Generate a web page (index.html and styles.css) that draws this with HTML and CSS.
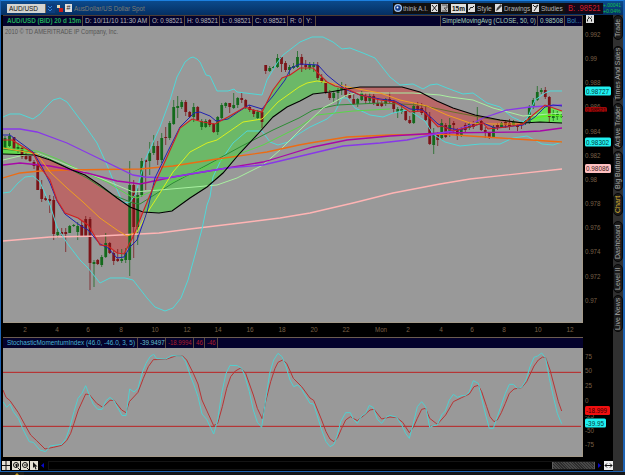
FILE: index.html
```html
<!DOCTYPE html>
<html lang="en">
<head>
    <meta charset="UTF-8">
    <title>AUD/USD Chart</title>
    <link rel="stylesheet" href="styles.css">
</head>
<body>
    <div class="window">
        <div class="main">
            <div class="toolbar">
                <div class="symbol"><span data-w="29">AUD/USD</span></div>
                <div class="dropdown"><svg width="8" height="9"><path d="M2 2l2 2 2-2M2 5l2 2 2-2" fill="none" stroke="#2f86dd"/></svg></div>
                <svg class="link-icon" width="7" height="9"><path d="M1 1h3v3h-3z" fill="#e8d8b0"/><path d="M3 4h4v4h-4z" fill="#c01818"/></svg>
                <div class="hash"><span>#</span></div>
                <div class="desc"><span data-w="71">AusDollar/US Dollar Spot</span></div>
                <div class="tools">
                    <svg class="w10" width="10" height="10"><circle cx="5" cy="5" r="4" fill="#a9c8ee"/><circle cx="5" cy="5" r="2.8" fill="#123a8c"/><circle cx="4.5" cy="4.5" r="1" fill="#fff"/></svg>
                    <div class="w28"><span data-w="25">think A.I.</span></div>
                    <svg class="w10" width="10" height="10"><path d="M1 1h7v8h-7z" fill="#ddd"/><path d="M2 2l5 6M7 2l-5 6" stroke="#222"/></svg>
                    <svg class="w10" width="10" height="10"><path d="M1 1h7v8h-7z" fill="#bbb"/><path d="M2 2h5v3h-3l3 3h-5" fill="none" stroke="#555"/></svg>
                    <div class="period"><span data-w="13">15m</span></div>
                    <svg class="w10" width="10" height="10"><path d="M1 1h7v8h-7z" fill="#ddd"/><path d="M2 7l2-3 1 1 2-2" fill="none" stroke="#222"/></svg>
                    <div class="w17"><span data-w="15">Style</span></div>
                    <svg class="w10" width="10" height="10"><path d="M1 1h7v8h-7z" fill="#ddd"/><path d="M2 8l1-3 4-4 1 2-4 4z" fill="#444"/></svg>
                    <div class="w28"><span data-w="26">Drawings</span></div>
                    <svg class="w10" width="10" height="10"><path d="M1 1h7v8h-7z" fill="#ddd"/><path d="M2 2l2 2 3-2-4 6" fill="none" stroke="#222"/></svg>
                    <div class="w24"><span data-w="22">Studies</span></div>
                </div>
                <div class="bid"><span data-w="33">B: .98521</span></div>
                <div class="change"><span data-w="18">+.00041</span><span data-w="18">+0.04%</span></div>
            </div>
            <div class="price">
                <div class="left">
                    <div class="info">
                        <div class="cell name"><span data-w="74">AUD/USD (BID) 20 d 15m</span></div>
                        <div class="cell date"><span data-w="62">D: 10/11/10 11:30 AM</span></div>
                        <div class="cell c35"><span data-w="31">O: 0.98521</span></div>
                        <div class="cell c35"><span data-w="31">H: 0.98521</span></div>
                        <div class="cell c33"><span data-w="29">L: 0.98521</span></div>
                        <div class="cell c35"><span data-w="31">C: 0.98521</span></div>
                        <div class="cell c16"><span data-w="12">R: 0</span></div>
                        <div class="cell c12"><span data-w="6">Y:</span></div>
                        <div class="cell sma"><span data-w="94">SimpleMovingAvg (CLOSE, 50, 0)</span></div>
                        <div class="cell smav"><span data-w="23">0.98508</span></div>
                        <div class="cell bol"><span data-w="14">Bol...</span></div>
                    </div>
                    <svg id="chart" class="plot" width="580" height="297" viewBox="3 26 580 297"></svg>
                    <svg id="times" width="580" height="14" viewBox="3 323 580 14"></svg>
                </div>
                <svg id="prices" width="30" height="322" viewBox="583 15 30 322"></svg>
            </div>
            <div class="osc">
                <div class="left">
                    <div class="info">
                        <div class="cell smi"><span data-w="128">StochasticMomentumIndex (46.0, -46.0, 3, 5)</span></div>
                        <div class="cell smik"><span data-w="25">-39.9497</span></div>
                        <div class="cell red c28"><span data-w="24">-18.9994</span></div>
                        <div class="cell red c11"><span data-w="7">46</span></div>
                        <div class="cell red c13"><span data-w="9">-46</span></div>
                    </div>
                    <svg class="plot" width="580" height="109" viewBox="9 114 1740 327">
                        <path class="level" d="M9 187H1743M9 349H1743"/>
                        <polyline class="d" points="9,240 18,262 30,272 55,308 75,345 92,375 110,392 135,417 160,412 185,406 200,392 212,370 222,340 235,300 257,252 268,254 290,280 308,292 330,271 342,271 365,300 378,308 388,275 414,247 430,205 445,170 460,149 497,148 530,137 548,138 560,150 580,190 594,222 606,270 641,347 653,340 667,290 680,235 692,200 706,183 722,174 737,190 760,255 772,295 787,327 797,275 812,215 825,175 834,157 848,150 860,160 880,205 905,230 930,264 941,271 965,330 978,365 990,387 1002,395 1013,383 1025,355 1037,330 1051,320 1072,332 1085,322 1110,300 1122,298 1145,327 1170,321 1190,323 1208,337 1228,368 1240,352 1252,325 1265,298 1277,295 1289,325 1312,343 1337,315 1360,275 1385,263 1408,252 1422,230 1435,226 1445,245 1460,290 1470,320 1482,335 1492,330 1504,308 1516,280 1528,250 1542,237 1565,233 1580,215 1602,168 1615,150 1628,141 1637,143 1650,180 1662,225 1675,275 1685,303"/>
                        <polyline class="k" points="9,275 20,292 30,282 40,305 55,325 70,360 88,395 100,397 120,420 137,425 150,408 185,403 198,385 210,350 222,305 234,265 246,250 257,227 268,255 280,283 293,298 306,298 318,272 330,262 342,272 354,295 366,316 378,317 389,237 402,246 414,235 426,190 438,160 450,140 461,133 470,146 497,147 515,137 545,138 557,155 570,195 582,225 594,260 606,312 620,328 641,372 653,330 665,250 678,190 690,166 712,167 725,175 735,200 748,245 760,300 772,337 785,352 797,270 809,190 821,150 834,130 846,140 858,170 870,210 881,230 893,225 905,238 930,280 941,282 965,360 978,395 990,410 1002,403 1012,375 1022,335 1037,308 1051,308 1060,328 1072,340 1085,318 1097,310 1108,286 1120,293 1132,328 1145,340 1158,322 1170,316 1190,322 1205,345 1217,370 1228,385 1240,340 1252,290 1265,275 1277,290 1289,352 1300,347 1312,345 1325,315 1336,303 1348,270 1360,253 1372,262 1385,257 1397,257 1408,245 1420,212 1435,220 1445,265 1457,315 1468,355 1480,355 1492,320 1504,285 1516,250 1528,223 1540,223 1552,235 1565,232 1578,210 1590,170 1602,142 1613,138 1625,129 1637,145 1648,205 1660,260 1672,310 1685,341"/>
                    </svg>
                </div>
                <svg id="levels" width="30" height="120" viewBox="583 337 30 120"></svg>
            </div>
            <div class="scroll">
                <svg width="37" height="9"><path d="M0 0h8v9h-8zM10 0h8v9h-8zM19 0h8v9h-8zM28 0h8v9h-8z" fill="#e4e0d4"/><path d="M4 0v9M0 4.500h8M16 7l2 2M25 7l2 2" stroke="#111" fill="none"/><path d="M31 1v6l1.500-1.500 1 3 1-.5-1-2.500h2z" fill="#111"/><circle cx="14" cy="4" r="2.500" fill="none" stroke="#111"/><path d="M13 4h3M14.500 3v3M22 4h3" stroke="#111"/><circle cx="23" cy="4" r="2.500" fill="none" stroke="#111"/></svg>
                <svg class="arrow" width="8" height="9"><path d="M5 2v5l-3-2.500z" fill="#0808c8"/></svg>
                <div class="track"><div class="thumb"></div></div>
                <svg class="arrow" width="8" height="9"><path d="M3 2v5l3-2.500z" fill="#0808c8"/></svg>
                <svg width="9" height="9"><path d="M0 0h9v9h-9z" fill="#eee"/><path d="M1 4.500h7M3 2.500l-2 2 2 2M6 2.500l2 2-2 2" stroke="#111" fill="none"/></svg>
            </div>
        </div>
        <div class="tabs">
            <div class="tab t1"><span>Trade</span></div>
            <div class="tab t2"><span>Times And Sales</span></div>
            <div class="tab t3"><span>Active Trader</span></div>
            <div class="tab t4"><span>Big Buttons</span></div>
            <div class="tab t5 active"><span>Chart</span></div>
            <div class="tab t6"><span>Dashboard</span></div>
            <div class="tab t7"><span>Level II</span></div>
            <div class="tab t8"><span>Live News</span></div>
        </div>
    </div>
    <div class="status"><svg width="14" height="3"><path d="M0 0h14v3h-14z" fill="#222018"/><path d="M5 3l2-2 2 2z" fill="#c8a020"/></svg></div>
    <script src="script.js"></script>
</body>
</html>
```
FILE: styles.css
```css
body {
    margin: 0;
    width: 625px;
    height: 475px;
    overflow: hidden;
    background: #000;
    font-family: "Liberation Sans", Arial, sans-serif;
    font-size: 8px;
    color: #b4b4b8;
}
svg {
    display: block;
    flex: none;
}
span {
    display: inline-block;
    white-space: nowrap;
    transform-origin: left center;
}
.window {
    display: flex;
    box-sizing: border-box;
    height: 472px;
    border: solid #1d63b4;
    border-width: 1px 2px 1px 1px;
    border-top-color: #1c80e0;
}
.main {
    width: 612px;
    flex: none;
}
.toolbar {
    display: flex;
    align-items: center;
    height: 14px;
    box-sizing: border-box;
    padding-left: 6px;
    background: linear-gradient(#0b4a8c, #052f62);
    line-height: 9px;
    width: 622px;
}
.toolbar > div {
    flex: none;
}
.symbol {
    box-sizing: border-box;
    width: 38px;
    height: 9px;
    padding-left: 2px;
    background: #d4d4d0;
    color: #111;
}
.dropdown {
    width: 9px;
    height: 9px;
    background: #0b3c7c;
    border-left: 1px solid #7a6a50;
}
.link-icon {
    margin-left: 1px;
}
.hash {
    width: 7px;
    height: 8px;
    margin-left: 2px;
    background: #ddd;
    color: #222;
    font-size: 7px;
    line-height: 8px;
    text-align: center;
}
.desc {
    width: 319px;
    margin-left: 2px;
    color: #7e7c74;
}
.tools {
    display: flex;
    align-items: center;
    height: 11px;
    width: 172px;
    background: #101010;
    overflow: hidden;
}
.w10 {
    width: 10px;
}
.w28 {
    width: 27px;
}
.w24 {
    width: 24px;
}
.w17 {
    width: 17px;
}
.period {
    width: 14px;
    height: 9px;
    margin: 0 1px;
    padding-left: 1px;
    background: #e0e0dc;
    color: #111;
    font-weight: bold;
}
.bid {
    width: 35px;
    padding-left: 3px;
    background: #120818;
    color: #d01c2c;
    font-size: 9px;
    line-height: 11px;
}
.change {
    display: flex;
    flex-direction: column;
    align-items: flex-start;
    font-size: 6px;
    line-height: 6px;
    color: #12c048;
    width: 19px;
}
.price, .osc {
    display: flex;
    margin-left: 2px;
}
.left {
    width: 580px;
}
.info {
    display: flex;
    box-sizing: border-box;
    height: 11px;
    width: 580px;
    border: solid #4c3c34;
    border-width: 1px 0 0 0;
    background: #04022c;
    line-height: 10px;
}
.cell {
    box-sizing: border-box;
    flex: none;
    height: 10px;
    padding-left: 2px;
    border-right: 1px solid #5a483c;
}
.name {
    width: 80px;
    padding-left: 4px;
    color: #1fa858;
    font-weight: bold;
}
.date {
    width: 67px;
}
.c35 {
    width: 35px;
}
.c33 {
    width: 33px;
}
.c28 {
    width: 28px;
}
.c16 {
    width: 16px;
}
.c13 {
    width: 13px;
}
.c12 {
    width: 12px;
}
.c11 {
    width: 11px;
}
.sma {
    width: 98px;
    margin-left: auto;
    padding-left: 1px;
    color: #a4d0b8;
    border-left: 1px solid #5a483c;
}
.smav {
    width: 27px;
    color: #a4d0b8;
}
.bol {
    width: 18px;
    color: #3890b8;
}
.smi {
    width: 135px;
    padding-left: 4px;
    color: #48b4d4;
}
.smik {
    width: 28px;
    color: #68c0d0;
}
.red {
    color: #b01c2c;
}
.osc .info {
    border-top-color: #6c5c50;
}
.plot {
    background: #999;
    box-shadow: inset -1px -1px #a49a8a;
}
.plot polyline, .plot path {
    fill: none;
}
.level {
    stroke: #bb2222;
    stroke-width: 3;
}
.d {
    stroke: #b83434;
    stroke-width: 3;
}
.k {
    stroke: #50d0d0;
    stroke-width: 3;
}
.up {
    fill: #146a1c;
}
.down {
    fill: #7c1418;
}
.wick {
    opacity: 0.75;
}
.axis {
    fill: #7a6048;
    font-size: 8px;
}
.scroll {
    display: flex;
    height: 9px;
    margin: 4px 0 0 1px;
}
.track {
    display: flex;
    justify-content: flex-end;
    box-sizing: border-box;
    width: 549px;
    height: 9px;
    border: 1px solid #141414;
    border-width: 1px 0 1px 1px;
}
.thumb {
    width: 41px;
    border: 1px solid #5c5c5c;
    border-width: 0 1px;
    background: repeating-linear-gradient(45deg, #484848 0 1px, #2c2c2c 1px 2px);
}
.arrow {
    margin-right: 1px;
}
.tabs {
    box-sizing: border-box;
    width: 10px;
    padding-top: 14px;
    background: linear-gradient(#303030, #303030) 0 14px no-repeat;
}
.tab {
    box-sizing: border-box;
    width: 10px;
    border: 1px solid #080808;
    border-radius: 5px;
    background: #1c1c1c;
    color: #a8a8a8;
    writing-mode: vertical-rl;
    transform: rotate(180deg);
    font-size: 7px;
    line-height: 8px;
    text-align: center;
}
.active {
    color: #d8b030;
}
.t1 { height: 25px; margin-bottom: 6px; }
.t2 { height: 55px; margin-bottom: 2px; }
.t3 { height: 46px; margin-bottom: 2px; }
.t4 { height: 40px; margin-bottom: 2px; }
.t5 { height: 23px; margin-bottom: 5px; }
.t6 { height: 41px; margin-bottom: 2px; }
.t7 { height: 29px; margin-bottom: 2px; }
.t8 { height: 37px; }
.status {
    height: 3px;
    padding-left: 10px;
    background: #141618;
}
```
FILE: script.js
```js
const NS = "http://www.w3.org/2000/svg";

function add(parent, tag, attrs, text) {
    const el = document.createElementNS(NS, tag);
    for (const key in attrs) el.setAttribute(key, attrs[key]);
    if (text !== undefined) el.textContent = text;
    parent.appendChild(el);
    return el;
}

const slow = [[3,154],[35,155],[50,160],[72,170],[85,175],[100,185],[117,198],[130,207],[143,212],[159,213],[172,211],[190,198],[207,187],[223,173],[240,153],[257,135],[273,117],[287,107],[300,101],[313,94],[330,92],[347,89],[360,87],[402,87],[420,92],[437,101],[453,108],[475,115],[500,120],[523,123],[540,122],[562,123]];
const fast = [[3,140],[12,140],[33,153],[40,167],[50,180],[57,200],[65,213],[78,218],[88,225],[100,245],[108,246],[117,253],[124,254],[133,237],[143,212],[155,183],[167,157],[180,128],[192,119],[203,122],[215,124],[228,117],[245,107],[253,110],[262,112],[273,90],[282,78],[290,75],[300,68],[313,68],[327,82],[335,86],[347,89],[360,95],[380,100],[395,102],[410,112],[423,111],[438,127],[442,126],[453,131],[470,127],[483,123],[488,129],[507,127],[523,124],[533,115],[545,105],[562,111]];

const lines = [
    ["#ffb4b4", 1.3, "3,241 50,237 100,236 159,233 190,229 240,223 280,218 310,213 353,203 393,193 440,184 470,179 562,169"],
    ["#50d8d8", 1, "3,117 10,114 20,114 33,119 40,114 46,107 53,100 60,98 67,102 73,110 88,130 97,143 107,165 115,185 123,203 130,202 135,195 139,182 145,160 160,127 170,100 177,77 185,62 190,58 193,57 197,59 200,62 206,75 210,76 217,91 228,91 234,89 237,92 262,95 267,80 277,63 283,55 300,42 312,37 323,37 333,42 342,49 350,48 363,53 375,58 390,77 400,85 413,84 423,89 430,85 437,84 447,88 463,94 473,93 487,103 500,107 512,117 523,122 528,117 535,100 545,93 550,91 562,91"],
    ["#50d8d8", 1, "3,193 10,192 18,183 25,177 33,176 40,182 50,205 57,227 67,243 80,260 88,268 100,283 110,278 125,278 133,280 147,298 155,307 165,311 173,308 181,298 188,280 195,255 202,229 207,205 210,197 213,177 220,162 233,143 247,131 262,131 270,142 278,145 288,142 297,135 310,127 327,119 335,112 342,98 347,98 355,108 370,115 383,117 393,113 407,110 413,113 425,121 433,134 445,142 460,146 480,144 500,144 513,138 527,136 542,144 553,145 562,142"],
    ["#2c8c34", 1, "3,149 37,153 60,164 87,178 113,195 133,203 140,204 173,183 207,165 240,147 273,130 299,118 313,110 337,105 380,103"],
    ["#687028", 1, "380,103 420,105 453,112 490,119 523,123"],
    ["#58d848", 1, "3,148 37,151 60,160 83,172 107,182 130,196 137,198 159,188 180,178 223,160 263,145 299,127 317,115 353,111 390,109"],
    ["#a8f0a0", 1, "3,160 20,156 37,153 67,165 100,178 133,192 160,190 217,185 237,178 263,165 280,150 303,127 323,108 347,95 357,93 413,93 440,95 450,97 473,100 493,108 523,116 562,113"],
    ["#ec6c14", 1.3, "3,178 20,173 40,171 67,170 140,169 173,166 217,159 267,152 299,145 310,143 347,137 390,135 440,134 470,136 500,138 562,142"],
    ["#a808a8", 1.3, "3,165 20,163 50,166 87,173 117,181 133,183 140,184 173,177 227,168 263,162 280,157 313,147 347,140 390,136 440,133 520,132 540,131 562,128"],
    ["#8838e8", 1.3, "3,129 20,129 37,132 67,143 100,159 133,175 145,177 167,178 190,174 227,168 263,165 280,161 343,146 380,143 407,140 440,133 453,131 470,125 483,118 507,110 530,107 562,105"],
    ["#f0a020", 1, "3,148 37,154 50,172 67,188 83,202 100,218 117,230 127,236 137,232"],
    ["#d8f020", 1, "137,232 147,213 160,193 173,172 190,152 207,143 217,140 243,122 262,119 278,102 299,87 307,83 317,81 330,83"],
    ["#f0a020", 1, "330,83 353,88 380,93 400,100 427,106 447,115 470,123 493,124 523,124"],
    ["#60f020", 1.3, "523,124 533,119 540,117 550,115 562,116"],
    ["#2020b0", 1, "3,135 10,135 33,152 42,167 50,183 57,201 65,214 78,224 88,230 100,244 108,248 117,258 124,257 130,247 137,240 147,212 155,178 167,153 180,127 194,113 200,112 210,116 216,121 228,119 238,112 249,105 262,109 273,96 285,80 291,68 300,64 318,65 327,75 338,84 347,90 360,95 380,99 395,101 410,109 423,110 438,124 447,128 460,130 483,123 495,128 523,125 535,117 545,107 553,105 562,106"],
];

// x, high, low, body top, body bottom, 1 = up
const candles = [[5,136,150,138,148,1],[9.5,133,147,136,146,1],[14,137,149,137,149,0],[18,143,153,147,149,1],[22,147,159,148,157,0],[26,153,160,156,159,0],[30,156,162,156,161,0],[34,160,169,162,166,0],[37.700,163,190,165,190,0],[41.700,180,202,189,199,0],[45.700,196,201,198,200,0],[49.700,195,213,199,201,0],[53.700,196,240,200,234,0],[57.700,228,238,232,235,1],[61.700,228,236,232,234,0],[65.700,228,252,232,234,0],[69.700,225,233,226,233,1],[73.700,224,227,225,226,1],[77.700,222,240,226,232,1],[81.700,221,237,225,236,0],[85.700,216,237,219,236,0],[90,217,290,219,263,0],[94,260,287,262,264,1],[97.700,259,265,260,264,0],[101.700,255,267,257,265,1],[105.700,233,258,243,257,1],[109.700,242,254,243,253,0],[113.700,250,265,253,261,0],[117.700,249,262,259,261,0],[121.700,249,263,259,261,1],[125.700,248,263,253,260,1],[129.700,161,276,185,260,1],[133.700,180,258,185,227,0],[137.700,188,245,195,227,1],[141.700,158,197,161,195,1],[145.700,159,190,160,162,0],[149.700,142,175,153,161,1],[153.700,135,155,146,153,1],[157.700,141,165,146,160,0],[161.700,133,163,138,160,1],[165.700,127,145,137,138,0],[169.700,121,140,123,138,1],[173.700,100,125,107,124,1],[177.700,96,118,106,108,1],[181.700,100,109,102,107,1],[185.700,100,116,102,112,0],[189.700,111,118,112,117,0],[193.700,103,122,107,117,1],[197.700,106,121,107,120,0],[201.700,119,130,121,127,1],[205.700,119,128,121,127,1],[209.700,119,127,120,125,0],[213.700,123,133,124,132,0],[217.700,116,135,117,132,1],[221.700,103,119,105,118,1],[225.700,102,108,103,106,1],[229.700,103,113,103,107,0],[233.700,93,109,105,108,1],[237.700,97,108,98,105,1],[241.700,93,103,98,100,0],[245.700,99,109,100,107,0],[249.700,105,112,107,110,0],[253.700,109,117,110,114,0],[257.700,110,119,112,118,1],[262,108,128,112,122,0],[265.700,65,74,65,71,0],[269.700,66,72,68,71,1],[273.500,66,69,67,68,1],[277.500,54,68,58,67,1],[281.500,57,72,57,64,0],[285.500,61,72,63,70,0],[289.500,65,75,67,70,1],[293.500,63,69,66,68,1],[297.500,51,68,57,67,1],[301.700,54,72,57,65,0],[305.700,60,70,65,67,0],[309.700,62,70,65,68,1],[313.700,62,72,65,67,1],[317.700,62,80,65,78,0],[321.700,74,83,78,82,0],[325.700,81,94,82,92,0],[329.700,90,100,93,98,0],[333.700,91,102,93,98,1],[338,88,106,90,93,1],[341.700,82,95,87,90,1],[345.700,84,97,88,95,0],[349.700,93,99,94,98,0],[353.700,94,105,99,104,0],[357.700,98,107,99,104,1],[361.700,91,101,93,100,1],[365.700,93,104,96,101,0],[369.700,93,103,96,101,1],[373.700,94,105,96,103,0],[377.700,98,106,103,106,0],[381.700,101,107,103,106,0],[385.700,98,106,99,104,1],[389.700,92,103,99,101,0],[393.700,100,113,101,109,0],[397.700,107,118,109,112,1],[401.700,105,114,109,112,1],[405.700,110,121,111,120,0],[409.700,116,124,120,123,0],[413.700,103,124,106,123,1],[417.700,102,111,106,110,0],[421.700,103,115,108,113,0],[425.700,105,121,112,120,0],[429.700,112,145,117,144,0],[433.700,128,154,135,145,1],[437.700,132,146,134,140,0],[441.700,119,140,123,138,1],[445.700,123,138,125,137,0],[449.700,118,137,125,131,1],[453.700,121,133,123,125,0],[457.300,128,140,130,136,0],[461.300,127,137,128,135,1],[465.300,123,132,125,130,0],[469.300,122,130,124,128,1],[473.300,121,129,123,127,0],[477.300,107,125,122,124,1],[481.300,120,131,121,130,0],[485.300,127,138,130,133,0],[489.300,132,139,133,137,0],[493.500,125,138,127,137,1],[497.500,123,130,125,127,0],[501.500,122,128,123,127,1],[505.500,120,128,122,125,0],[509.500,119,130,123,126,0],[513.500,120,126,122,125,1],[517.500,124,131,125,127,0],[521.500,121,129,123,125,0],[525.500,119,125,121,123,1],[529.300,105,124,107,122,1],[533.300,98,109,100,107,1],[537.300,86,101,92,100,1],[541.300,88,94,90,92,1],[545.300,87,99,90,97,0],[549.300,96,122,97,117,0],[553.300,110,121,113,118,1],[557.300,111,120,113,117,1],[561.300,114,118,116,117,1]];

const chart = document.getElementById("chart");

function cloud(from, to, fill) {
    const inside = p => p[0] >= from && p[0] <= to;
    const pts = fast.filter(inside).concat(slow.filter(inside).reverse());
    add(chart, "polygon", { points: pts.join(" "), fill: fill });
}
cloud(3, 35, "#62d850");
cloud(33, 143, "#b86868");
cloud(143, 347, "#6cb868");
cloud(347, 523, "#b86868");
cloud(523, 562, "#68e058");

candles.forEach(([x, high, low, top, bottom, up]) => {
    const cls = up ? "up" : "down";
    add(chart, "rect", { class: cls + " wick", x: x - 0.5, y: high, width: 1, height: low - high });
    add(chart, "rect", { class: cls, x: x - 1.4, y: top, width: 2.8, height: bottom - top });
});

lines.forEach(([color, width, points]) => {
    add(chart, "polyline", { points: points, stroke: color, "stroke-width": width });
});
add(chart, "polyline", { points: slow.join(" "), stroke: "#000", "stroke-width": 1.1 });
add(chart, "polyline", { points: fast.join(" "), stroke: "#d02020", "stroke-width": 1.1 });
add(chart, "text", { x: 5, y: 34, fill: "#555", "font-size": 7.5, textLength: 113, lengthAdjust: "spacingAndGlyphs" }, "2010 © TD AMERITRADE IP Company, Inc.");

function label(svg, x, y, text, width, anchor) {
    add(svg, "text", { class: "axis", x: x, y: y + 3, textLength: width, lengthAdjust: "spacingAndGlyphs", "text-anchor": anchor }, text);
}

function badge(svg, y, w, h, fill, text, textWidth, color) {
    add(svg, "rect", { x: 585, y: y - h / 2, width: w, height: h, rx: 1.5, fill: fill });
    add(svg, "text", { x: 586, y: y + h / 2 - (h < 8 ? 0.5 : 1.7), fill: color, "font-size": h < 8 ? 6 : 8, textLength: textWidth, lengthAdjust: "spacingAndGlyphs" }, text);
}

const times = document.getElementById("times");
[[25,"2"],[57,"4"],[88,"6"],[121,"8"],[155,"10"],[187,"12"],[218,"14"],[250,"16"],[282,"18"],[314,"20"],[346,"22"],[381,"Mon"],[408,"2"],[441,"4"],[472,"6"],[504,"8"],[538,"10"],[570,"12"]].forEach(([x, t]) => {
    label(times, x, 328.500, t, t === "Mon" ? 12 : t.length * 3.6, "middle");
});

const prices = document.getElementById("prices");
["0.992", "0.99", "0.988", "0.986", "0.984", "0.982", "0.98", "0.978", "0.976", "0.974", "0.972", "0.97"].forEach((t, i) => {
    label(prices, 585, 34 + i * 24.15, t, t.length === 5 ? 15.5 : 12, "start");
});
add(prices, "rect", { x: 586, y: 15, width: 8, height: 8, fill: "#ddd" });
add(prices, "path", { d: "M587.500 21.500v-2l2-2 2 2v2M588 17h1M591 17h1", stroke: "#222", fill: "none" });
badge(prices, 91, 26, 9, "#20f0f0", "0.98727", 23, "#063838");
badge(prices, 109.500, 22, 5, "#a00808", "0.98521", 20, "#300");
badge(prices, 142, 26, 9, "#20f0f0", "0.98302", 23, "#063838");
badge(prices, 168.500, 26, 9, "#ffc0c0", "0.98086", 23, "#402020");

const levels = document.getElementById("levels");
["75", "50", "25", "0", "-25", "-50", "-75"].forEach((t, i) => {
    label(levels, 585, 355.500 + i * 14.8, t, t.length === 3 ? 9 : t.length * 3.5, "start");
});
badge(levels, 410.500, 25, 9, "#f01010", "-18.999", 21, "#300");
badge(levels, 423, 21, 9, "#20f0f0", "-39.95", 18, "#063838");

// squeeze labels into their cells
document.querySelectorAll("[data-w]").forEach(el => {
    el.style.transform = `scaleX(${el.dataset.w / el.offsetWidth})`;
});
```
